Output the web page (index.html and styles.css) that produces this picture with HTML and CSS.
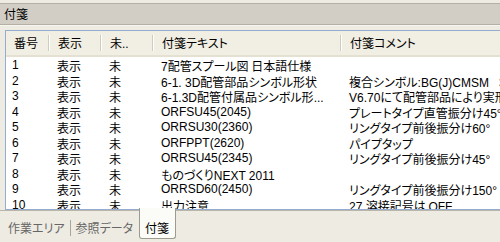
FILE: index.html
```html
<!DOCTYPE html>
<html lang="ja">
<head>
<meta charset="utf-8">
<link rel="stylesheet" href="styles.css">
</head>
<body>
<div class="title">付箋</div>
<div class="panel">
  <div class="head">
    <div class="th">番号</div>
    <div class="th">表示</div>
    <div class="th">未<span class="en">..</span></div>
    <div class="th">付箋テキスト</div>
    <div class="th">付箋コメント</div>
  </div>
  <div class="body">
    <div class="row"><span class="c1 en">1</span><span>表示</span><span>未</span><span><span class="en">7</span>配管スプール図 日本語仕様</span><span></span></div>
    <div class="row"><span class="c1 en">2</span><span>表示</span><span>未</span><span><span class="en">6-1. 3D</span>配管部品シンボル形状</span><span>複合シンボル<span class="en">:BG(J)CMSM&nbsp;&nbsp;&nbsp;3D</span></span></div>
    <div class="row"><span class="c1 en">3</span><span>表示</span><span>未</span><span><span class="en">6-1.3D</span>配管付属品シンボル形<span class="en">...</span></span><span><span class="en">V6.70</span>にて配管部品により実形状</span></div>
    <div class="row"><span class="c1 en">4</span><span>表示</span><span>未</span><span class="en">ORFSU45(2045)</span><span>プレートタイプ直管振分け<span class="en">45°</span></span></div>
    <div class="row"><span class="c1 en">5</span><span>表示</span><span>未</span><span class="en">ORRSU30(2360)</span><span>リングタイプ前後振分け<span class="en">60°</span></span></div>
    <div class="row"><span class="c1 en">6</span><span>表示</span><span>未</span><span class="en">ORFPPT(2620)</span><span>パイプタップ</span></div>
    <div class="row"><span class="c1 en">7</span><span>表示</span><span>未</span><span class="en">ORRSU45(2345)</span><span>リングタイプ前後振分け<span class="en">45°</span></span></div>
    <div class="row"><span class="c1 en">8</span><span>表示</span><span>未</span><span>ものづくり<span class="en">NEXT 2011</span></span><span></span></div>
    <div class="row"><span class="c1 en">9</span><span>表示</span><span>未</span><span class="en">ORRSD60(2450)</span><span>リングタイプ前後振分け<span class="en">150°</span></span></div>
    <div class="row"><span class="c1 en">10</span><span>表示</span><span>未</span><span>出力注意</span><span><span class="en">27 </span>溶接記号は <span class="en">OFF</span></span></div>
  </div>
</div>
<div class="tabs">
  <div class="tab">作業エリア</div>
  <div class="sep"></div>
  <div class="tab">参照データ</div>
  <div class="tab active">付箋</div>
</div>
</body>
</html>
```
FILE: styles.css
```css
html, body {
  margin: 0;
  padding: 0;
}
body {
  width: 500px;
  height: 242px;
  overflow: hidden;
  background: #eeebe2;
  font-family: "Noto Sans CJK JP", sans-serif;
  font-size: 12px;
  font-feature-settings: "palt";
  color: #000;
}
.en {
  font-family: "Liberation Sans Narrow", "Liberation Sans", sans-serif;
  font-size: 12px;
}
.title {
  margin-top: 3px;
  height: 20px;
  line-height: 20px;
  padding-left: 4px;
  background: #d2cec6;
  border-top: 1px solid #b4b0a5;
  border-bottom: 1px solid #b4b0a5;
  box-shadow: 0 1px 0 #f7f5ef;
}
.panel {
  margin-top: 5px;
  margin-left: 5px;
  width: 495px;
  height: 178px;
  border-top: 1px solid #94acd0;
  border-left: 1px solid #94acd0;
  border-bottom: 1px solid #94acd0;
  background: #fff;
  overflow: hidden;
}
.head, .row {
  display: grid;
  grid-template-columns: 42px 52px 52px 188px 1fr;
  white-space: nowrap;
}
.head {
  height: 24px;
  background: #f1eee3;
  border-bottom: 2px solid #e4e0d2;
  align-items: center;
}
.th {
  padding-left: 9px;
  height: 16px;
  line-height: 16px;
  border-left: 1px solid #cfcbbd;
  box-shadow: inset 1px 0 0 #fff;
}
.th:first-child {
  border-left: none;
  box-shadow: none;
  padding-left: 8px;
}
.body {
  padding-top: 1px;
}
.row {
  height: 15.5px;
  line-height: 15.5px;
}
.row > span {
  padding-left: 9px;
  overflow: hidden;
}
.row > span:last-child {
  overflow: visible;
}
.row > span.c1 {
  padding-left: 6px;
}
.tabs {
  display: flex;
  align-items: flex-start;
  height: 32px;
  border-top: 1px solid #b9b5aa;
  padding-left: 8px;
}
.tab {
  color: #666;
  padding-top: 9px;
  line-height: 16px;
}
.sep {
  width: 1px;
  height: 16px;
  margin: 9px 5px 0 5px;
  background: #a8a59c;
}
.tab + .sep + .tab {
  margin-right: 6px;
}
.tab.active {
  color: #000;
  background: #fbfbf8;
  margin-top: -3px;
  padding: 12px 6px 0 5px;
  height: 18px;
  border: 1px solid #9d9a8f;
  border-top: none;
  border-radius: 0 0 3px 3px;
}
```
